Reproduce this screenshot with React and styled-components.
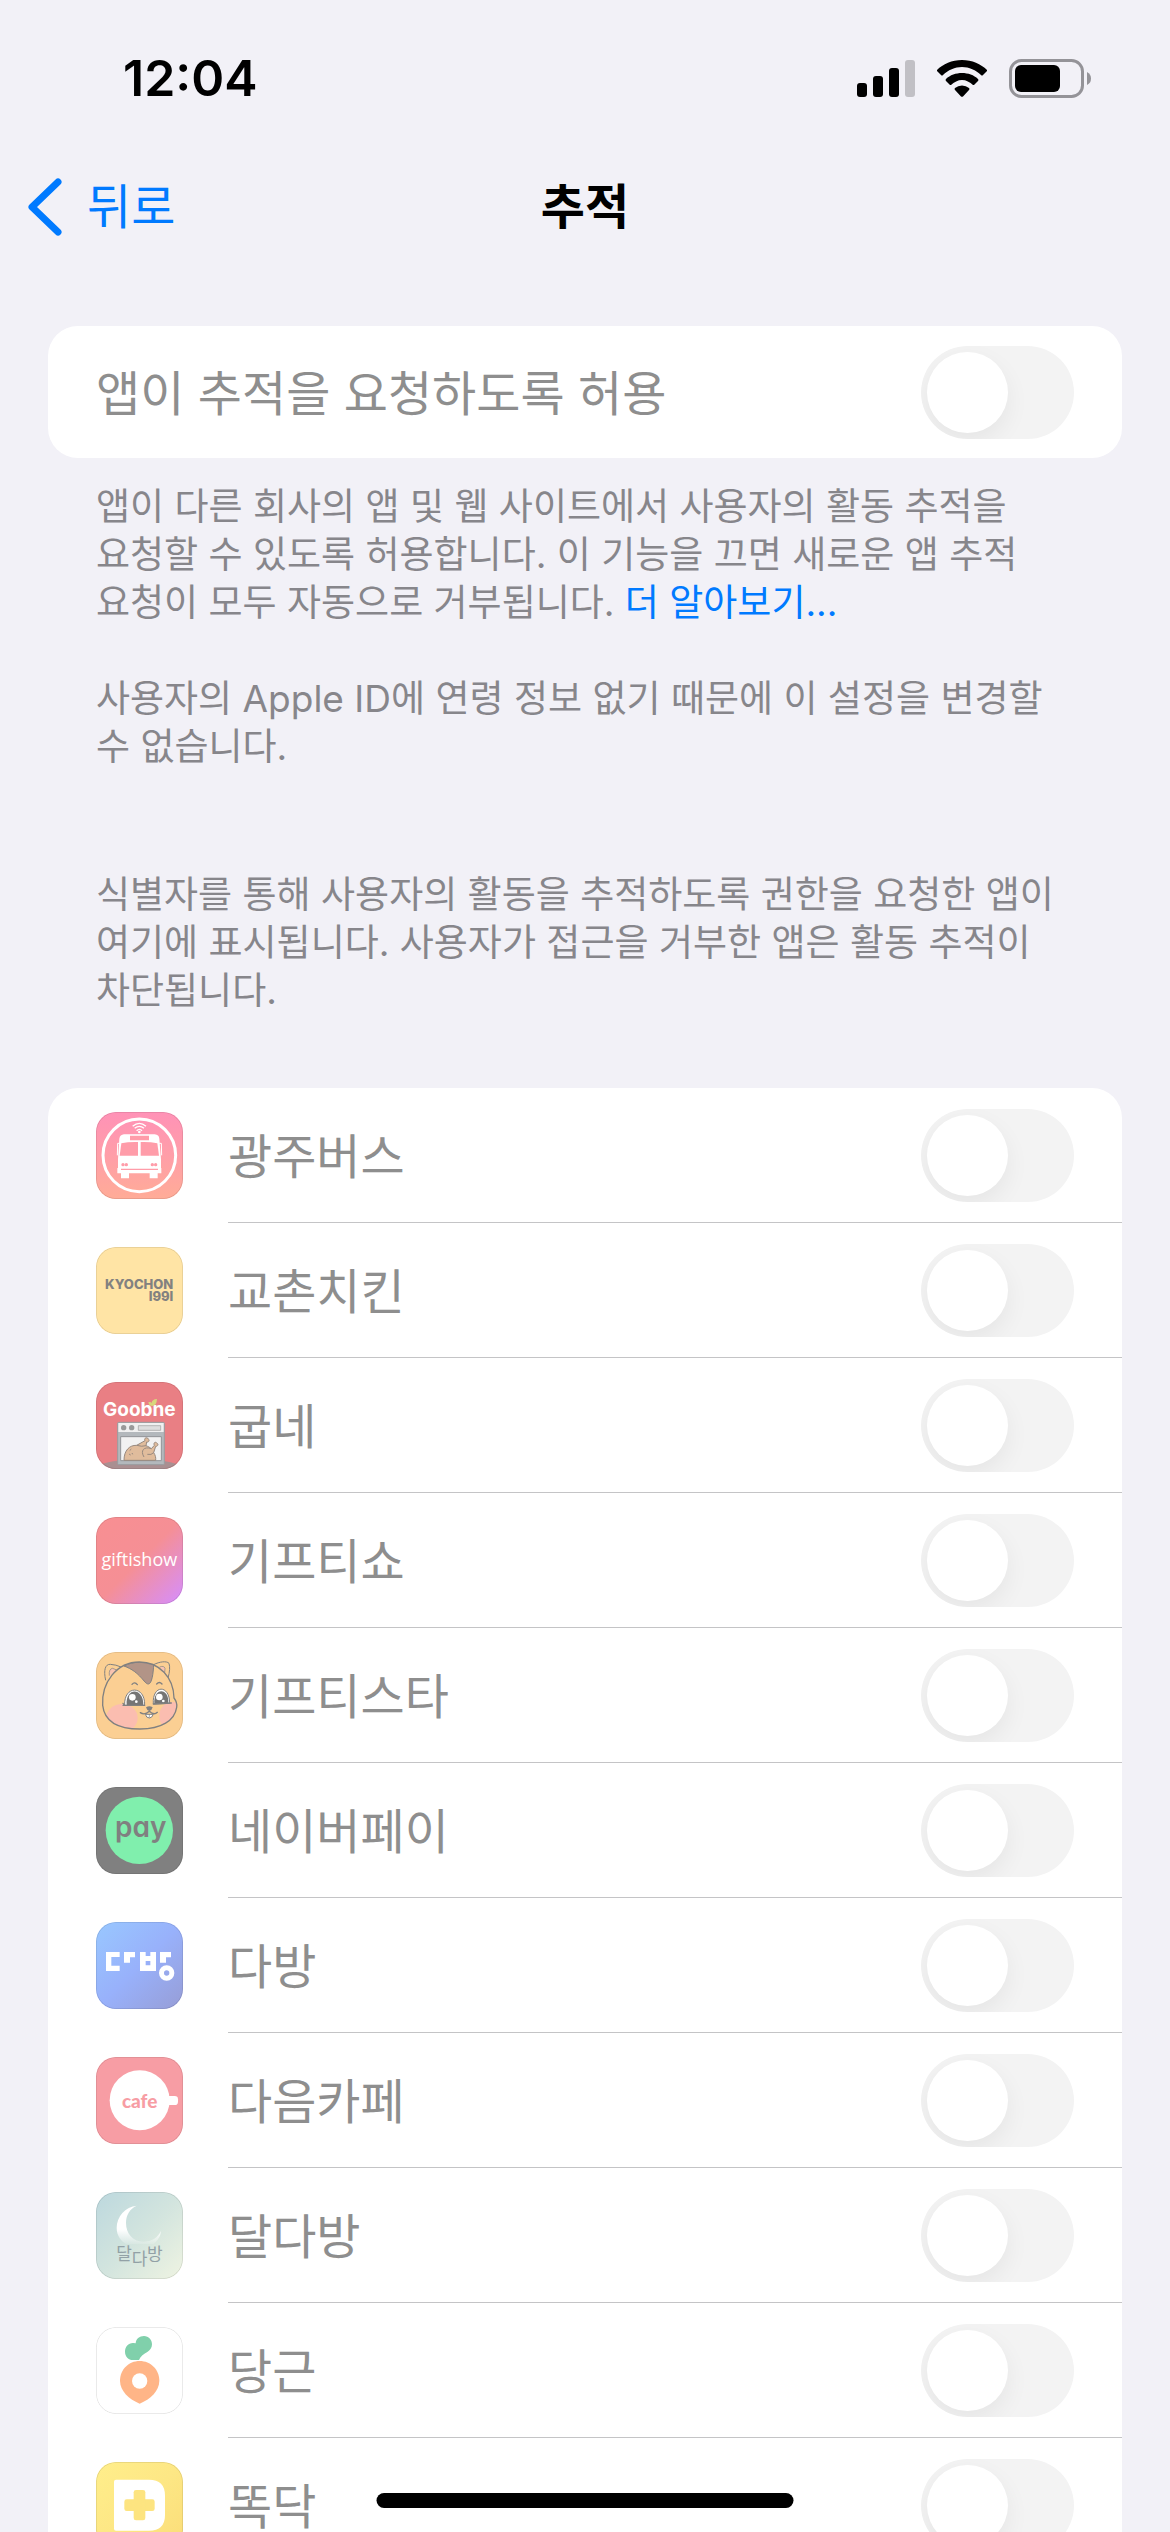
import { useId } from "react";
import styled, { createGlobalStyle } from "styled-components";

const GlobalStyle = createGlobalStyle`
    * {
        box-sizing: border-box;
    }

    body {
        margin: 0;
        background: #f2f1f7;
        font-family: Inter, "Noto Sans CJK KR", sans-serif;
        color: #000;
        word-break: keep-all;
    }
`;

const Screen = styled.div`
    height: 100vh;
    display: flex;
    flex-direction: column;
    overflow: hidden;
`;

const StatusBar = styled.header`
    flex: none;
    height: 141px;
    padding: 15px 78px 0 123px;
    display: flex;
    align-items: center;
    justify-content: space-between;
`;

const Clock = styled.time`
    font-size: 50px;
    line-height: 60px;
    font-weight: 600;
`;

const StatusIcons = styled.div`
    display: flex;
    align-items: center;
    gap: 22px;
`;

const NavBar = styled.nav`
    flex: none;
    height: 132px;
    padding: 0 27px;
    display: grid;
    grid-template-columns: 1fr auto 1fr;
    align-items: center;
`;

const BackButton = styled.button`
    justify-self: start;
    display: flex;
    align-items: center;
    gap: 24px;
    padding: 0;
    border: 0;
    background: none;
    color: #007aff;
    font-family: inherit;
    font-size: 48px;
    line-height: 60px;
    cursor: pointer;
`;

const Title = styled.h1`
    margin: 0;
    font-size: 48px;
    line-height: 60px;
    font-weight: 600;
`;

const Content = styled.main`
    flex: 1;
    min-height: 0;
    padding: 53px 48px 0;
    overflow-y: auto;
    scrollbar-width: none;
`;

const Card = styled.section`
    background: #fff;
    border-radius: 30px;
    overflow: hidden;
`;

const AppList = styled.ul`
    margin: 0;
    padding: 0;
    list-style: none;
`;

const Row = styled.li`
    display: flex;
    align-items: center;
    gap: 45px;
    padding-left: 48px;
`;

const RowBody = styled.div`
    flex: 1;
    height: ${(props) => (props.$plain ? "132px" : "135px")};
    padding-right: 48px;
    padding-left: ${(props) => (props.$plain ? "48px" : "0")};
    border-bottom: ${(props) => (props.$plain ? "0" : "1px solid #c4c4c6")};
    display: flex;
    align-items: center;
    justify-content: space-between;
`;

const RowLabel = styled.label`
    padding-top: 4px;
    color: #8e8e8e;
    font-size: 48px;
    line-height: 60px;
`;

const Switch = styled.input`
    appearance: none;
    flex: none;
    width: 153px;
    height: 93px;
    margin: 0;
    padding: 6px;
    border-radius: 47px;
    background: #f3f3f3;
    overflow: hidden;

    &::before {
        content: "";
        display: block;
        width: 81px;
        height: 81px;
        border-radius: 50%;
        background: #fff;
        box-shadow: 0 9px 24px rgba(0, 0, 0, 0.06);
    }

    &:checked::before {
        margin-left: auto;
    }
`;

const Notes = styled.div`
    padding: 25px 48px 0;
    margin-bottom: ${(props) => (props.$last ? "73px" : "75px")};
    color: #87868b;
    font-size: 37px;
    line-height: 48px;
`;

const Note = styled.p`
    margin: 0;

    & + & {
        margin-top: 48px;
    }
`;

const MoreLink = styled.a`
    color: #007aff;
    text-decoration: none;
`;

const AppIcon = styled.svg`
    flex: none;
    display: block;
    width: 87px;
    height: 87px;
    border-radius: 20px;
`;

const HomeIndicator = styled.div`
    position: fixed;
    left: 50%;
    bottom: 24px;
    width: 417px;
    height: 15px;
    border-radius: 8px;
    background: #000;
    transform: translateX(-50%);
`;

// every app icon is drawn on a 261 unit square
function Tile({ label, edge = "rgba(0, 0, 0, 0.1)", children }) {
    return (
        <AppIcon viewBox="0 0 261 261" role="img" aria-label={label}>
            {children}
            <rect x="1" y="1" width="259" height="259" rx="60" fill="none" stroke={edge} strokeWidth="3"/>
        </AppIcon>
    )
}

function Gradient({ id, from, middle, to, vertical }) {
    return (
        <linearGradient id={id} x1="0" y1="0" x2={vertical ? "0" : "1"} y2="1">
            <stop offset="0" stopColor={from}/>
            <stop offset="0.5" stopColor={middle}/>
            <stop offset="1" stopColor={to}/>
        </linearGradient>
    )
}

function BusIcon() {
    const id = useId();

    return (
        <Tile label="광주버스">
            <defs><Gradient id={id} from="#ff92b7" middle="#ff9ea8" to="#ffac97" vertical/></defs>
            <rect width="261" height="261" fill={`url(#${id})`}/>
            <circle cx="130" cy="130" r="109" fill="none" stroke="#fff" strokeWidth="9"/>
            <g fill="none" stroke="#fff" strokeWidth="4">
                <path d="M110 43Q130 25 150 43"/>
                <path d="M116 49Q130 37 144 49"/>
                <path d="M122 56Q130 48 138 56"/>
            </g>
            <circle cx="130" cy="60" r="4" fill="#fff"/>
            <path fill="#fff" d="M84 67H176Q189 68 190 80L195 142V168H196V184H185V199H161V184H99V199H75V184H64V168H66V142L70 80Q72 68 84 67Z"/>
            <path fill="none" stroke="#fff" strokeWidth="3" d="M72 94H65L64 130M188 94H196L197 130"/>
            <g fill="#ff9ca9">
                <path d="M102 71H159V85H102Z"/>
                <path d="M76 94Q98 89 126 90V131H71Z"/>
                <path d="M184 94Q162 89 134 90V131H189Z"/>
                <circle cx="81" cy="158" r="5"/>
                <circle cx="91" cy="158" r="5"/>
                <circle cx="169" cy="158" r="5"/>
                <circle cx="179" cy="158" r="5"/>
                <path d="M75 170H186V174H75Z"/>
            </g>
        </Tile>
    )
}

function KyochonIcon() {
    return (
        <Tile label="교촌치킨">
            <rect width="261" height="261" fill="#ffe4a5"/>
            <g fill="#828180" fontFamily="Inter" fontWeight="800" fontSize="39" textAnchor="end">
                <text x="232" y="127">KYOCHON</text>
                <text x="232" y="163">I99I</text>
            </g>
        </Tile>
    )
}

function GoobneIcon() {
    return (
        <Tile label="굽네">
            <rect width="261" height="261" fill="#e97f84"/>
            <ellipse cx="130" cy="261" rx="132" ry="29" fill="#aa8f91"/>
            <text x="130" y="101" fill="#fff" fontFamily="Inter" fontWeight="700" fontSize="57" textAnchor="middle">Goobne</text>
            <path fill="#d8d77b" d="M157 61Q164 58 167 63Q168 52 183 51Q182 70 170 72Q158 72 157 61Z"/>
            <rect x="65" y="121" width="140" height="127" rx="3" fill="#b3b8bc" stroke="#9a9c9e" strokeWidth="3"/>
            <path d="M67 123H203V150H67Z" fill="#f0f0f0"/>
            <circle cx="83" cy="137" r="8" fill="#999"/>
            <circle cx="107" cy="137" r="8" fill="#999"/>
            <path d="M127 131H194V145H127Z" fill="#dedede" stroke="#9a9a9a" strokeWidth="2"/>
            <path d="M74 164H196V236H74Z" fill="#f2f2f2" stroke="#919497" strokeWidth="3"/>
            <g fill="#e0bc9c" stroke="#97897f" strokeWidth="3" strokeLinejoin="round">
                <path d="M84 235C84 206 100 189 122 190L147 176C143 168 153 164 157 171C162 174 158 182 152 180L150 191C158 194 162 197 166 200L175 190C171 181 180 178 183 184C189 187 184 194 179 193L173 212C178 219 180 227 179 235Z"/>
                <path d="M150 191Q138 195 122 190M166 200C144 192 132 206 144 225M173 212Q166 220 154 217" fill="none"/>
                <path d="M101 206L106 201M99 216L104 219M108 213L110 217" fill="none"/>
            </g>
        </Tile>
    )
}

function GiftishowIcon() {
    const id = useId();

    return (
        <Tile label="기프티쇼">
            <defs><Gradient id={id} from="#f88f92" middle="#f58f95" to="#d58eff"/></defs>
            <rect width="261" height="261" fill={`url(#${id})`}/>
            <text x="130" y="147" fill="#fff" fontFamily="Open Sans" fontWeight="500" fontSize="54" textAnchor="middle">giftishow</text>
        </Tile>
    )
}

function GiftistarIcon() {
    const id = useId();
    const face = "M130 30C190 30 233 76 234 138C240 146 244 156 242 166C236 206 196 231 132 231C70 231 26 212 20 160C16 92 62 30 130 30Z";

    return (
        <Tile label="기프티스타">
            <rect width="261" height="261" fill="#fbcf93"/>
            <g fill="#fbcf93" stroke="#808080" strokeWidth="3">
                <path d="M29 85C22 54 28 36 43 37Q60 38 75 45"/>
                <path d="M173 38C190 29 212 26 219 34Q224 50 216 78"/>
                <path d="M40 71Q38 50 50 49L62 54M191 45Q204 40 207 49L206 62" fill="#f8c3b0" strokeWidth="2"/>
            </g>
            <clipPath id={id}><path d={face}/></clipPath>
            <path d={face} fill="#fbcf93"/>
            <g clipPath={`url(#${id})`}>
                <ellipse cx="78" cy="198" rx="47" ry="42" fill="#fbbdb0"/>
                <ellipse cx="228" cy="192" rx="38" ry="42" fill="#fbbdb0"/>
                <path d="M84 42C112 27 150 27 173 38C172 62 168 96 157 96C144 96 134 60 84 42Z" fill="#b29487" stroke="#808080" strokeWidth="3"/>
            </g>
            <path d={face} fill="none" stroke="#808080" strokeWidth="4"/>
            <g stroke="#808080" strokeWidth="3">
                <path d="M86 160C83 99 148 99 146 160Z" fill="#fff"/>
                <path d="M172 156C168 98 221 96 221 154Z" fill="#fff"/>
            </g>
            <path d="M92 159C87 105 143 105 142 159Z" fill="#757575"/>
            <path d="M175 156C171 105 220 105 217 154Z" fill="#757575"/>
            <g fill="#fff">
                <circle cx="109" cy="136" r="10"/>
                <circle cx="121" cy="149" r="4"/>
                <circle cx="190" cy="135" r="10"/>
                <circle cx="202" cy="147" r="4"/>
            </g>
            <g fill="none" stroke="#808080" strokeWidth="4" strokeLinecap="round">
                <path d="M108 97Q116 88 124 98M182 96Q190 87 198 96"/>
                <path d="M81 160H146M172 156L226 153M81 154L86 160"/>
                <path d="M133 182Q146 191 160 178Q174 191 184 181"/>
            </g>
            <path d="M148 187H172Q168 198 160 198Q151 198 148 187Z" fill="#fff" stroke="#808080" strokeWidth="3"/>
            <path d="M160 187V197" stroke="#808080" strokeWidth="2"/>
            <path d="M150 166Q160 160 170 166Q168 175 160 177Q152 175 150 166Z" fill="#808080"/>
        </Tile>
    )
}

const PayWord = styled.text`
    font-family: Inter;
    font-weight: 600;
    font-feature-settings: "cv11";
`;

function NaverPayIcon() {
    return (
        <Tile label="네이버페이">
            <rect width="261" height="261" fill="#808080"/>
            <circle cx="130" cy="130" r="101" fill="#80efad"/>
            <PayWord x="134" y="150" fill="#808080" fontSize="84" textAnchor="middle">pay</PayWord>
        </Tile>
    )
}

function DabangIcon() {
    const id = useId();

    return (
        <Tile label="다방">
            <defs><Gradient id={id} from="#99c8ff" middle="#98b1fb" to="#979dd6"/></defs>
            <rect width="261" height="261" fill={`url(#${id})`}/>
            <g fill="#fff" fillRule="evenodd">
                <path d="M30 90H71V105H46V131H71V147H30Z"/>
                <path d="M84 90H117V106H102V122H84Z"/>
                <path d="M132 90H149V102H163V90H180V147H132ZM149 117V130H163V117Z"/>
                <path d="M192 90H225V106H210V122H192Z"/>
                <path d="M212 130A23 23 0 1 0 212 176A23 23 0 1 0 212 130ZM212 145A8 8 0 1 1 212 161A8 8 0 1 1 212 145Z"/>
            </g>
        </Tile>
    )
}

function CafeIcon() {
    return (
        <Tile label="다음카페">
            <rect width="261" height="261" fill="#f79da4"/>
            <circle cx="131" cy="130" r="90" fill="#fff"/>
            <rect x="200" y="117" width="46" height="27" rx="10" fill="#fff"/>
            <text x="131" y="152" fill="#f79da4" fontFamily="Lato" fontWeight="900" fontSize="57" textAnchor="middle">cafe</text>
        </Tile>
    )
}

function DaldabangIcon() {
    const id = useId();

    return (
        <Tile label="달다방">
            <defs>
                <Gradient id={id} from="#bcd8de" middle="#d2e4de" to="#eff4e2"/>
                <linearGradient id={`${id}moon`} gradientUnits="userSpaceOnUse" x1="0" y1="112" x2="0" y2="162">
                    <stop offset="0" stopColor="#fff"/>
                    <stop offset="1" stopColor="#fff" stopOpacity="0"/>
                </linearGradient>
            </defs>
            <rect width="261" height="261" fill={`url(#${id})`}/>
            <path d="M122 41A67 67 0 0 0 62 108C62 132 76 148 90 156H172C186 146 194 132 195 117C186 136 168 149 142 149C110 149 90 124 90 93C90 70 101 50 122 41Z" fill={`url(#${id}moon)`}/>
            <g fill="#92a1a6" fontFamily="Noto Sans CJK KR" fontSize="51">
                <text x="61" y="204">달</text>
                <text x="107" y="220">다</text>
                <text x="153" y="204">방</text>
            </g>
        </Tile>
    )
}

function DanggeunIcon() {
    return (
        <Tile label="당근">
            <rect width="261" height="261" fill="#fff"/>
            <path fill="#80d0ab" d="M111 99C97 99 87 88 87 74C87 59 98 47 112 48Q116 48 119 49C120 36 130 27 144 27C158 27 168 38 168 52C168 63 162 70 154 75C144 81 133 88 129 99Z"/>
            <path fill="#ffb587" d="M131 102C164 102 190 128 190 161C190 192 163 216 131 230C99 216 72 192 72 161C72 128 98 102 131 102Z"/>
            <circle cx="131" cy="162" r="23" fill="#fff"/>
        </Tile>
    )
}

function DdokdakIcon() {
    const id = useId();

    return (
        <Tile label="똑닥">
            <defs><Gradient id={id} from="#ffee8b" middle="#fde785" to="#fbdd78"/></defs>
            <rect width="261" height="261" fill={`url(#${id})`}/>
            <path fill="#fff" d="M60 53H159Q207 53 207 101V158Q207 206 159 206H60Q54 206 54 200V59Q54 53 60 53Z"/>
            <g fill="#fde480">
                <rect x="85" y="112" width="91" height="35" rx="7"/>
                <rect x="113" y="84" width="35" height="91" rx="7"/>
            </g>
        </Tile>
    )
}

const apps = [
    { id: "bus", name: "광주버스", Icon: BusIcon },
    { id: "kyochon", name: "교촌치킨", Icon: KyochonIcon },
    { id: "goobne", name: "굽네", Icon: GoobneIcon },
    { id: "giftishow", name: "기프티쇼", Icon: GiftishowIcon },
    { id: "giftistar", name: "기프티스타", Icon: GiftistarIcon },
    { id: "naverpay", name: "네이버페이", Icon: NaverPayIcon },
    { id: "dabang", name: "다방", Icon: DabangIcon },
    { id: "cafe", name: "다음카페", Icon: CafeIcon },
    { id: "daldabang", name: "달다방", Icon: DaldabangIcon },
    { id: "danggeun", name: "당근", Icon: DanggeunIcon },
    { id: "ddokdak", name: "똑닥", Icon: DdokdakIcon },
];

function SignalIcon() {
    return (
        <svg width="58" height="37" viewBox="0 0 58 37" aria-hidden="true">
            <rect x="0" y="23" width="10" height="14" rx="3"/>
            <rect x="16" y="16" width="10" height="21" rx="3"/>
            <rect x="32" y="8" width="10" height="29" rx="3"/>
            <rect x="48" y="0" width="10" height="37" rx="3" fill="#c1c0c5"/>
        </svg>
    )
}

function WifiIcon() {
    return (
        <svg width="50" height="37" viewBox="0 0 50 37" aria-hidden="true">
            <path d="M25 0C35 0 44 4 50 10Q50 11 50 11L46 15Q45 16 44 15C39 10 32 7 25 7C18 7 11 10 6 15Q5 16 4 15L0 11Q0 11 0 10C6 4 15 0 25 0Z"/>
            <path d="M25 13C31 13 37 15 41 19Q42 20 41 21L37 25Q36 25 36 25C33 22 29 20 25 20C21 20 17 22 14 25Q14 25 13 25L9 21Q8 20 9 19C13 15 19 13 25 13Z"/>
            <path d="M25 25.500Q29 25.500 32 28Q33 29 32 30L26 36.500Q25 37 24 36.500L18 30Q17 29 18 28Q21 25.500 25 25.500Z"/>
        </svg>
    )
}

function BatteryIcon() {
    return (
        <svg width="83" height="39" viewBox="0 0 83 39" aria-hidden="true">
            <rect x="1.500" y="1.500" width="72" height="36" rx="11" fill="none" stroke="#949398" strokeWidth="3"/>
            <rect x="6" y="6" width="45" height="27" rx="6"/>
            <path d="M78 13Q82 15 82 19.500Q82 24 78 26Z" fill="#949398"/>
        </svg>
    )
}

export default function App() {
    return (
        <>
            <GlobalStyle/>
            <Screen>
                <StatusBar>
                    <Clock>12:04</Clock>
                    <StatusIcons>
                        <SignalIcon/>
                        <WifiIcon/>
                        <BatteryIcon/>
                    </StatusIcons>
                </StatusBar>

                <NavBar>
                    <BackButton type="button">
                        <svg width="36" height="60" viewBox="0 0 36 60" fill="none" stroke="#007aff" strokeWidth="7" strokeLinecap="round" strokeLinejoin="round" aria-hidden="true">
                            <path d="M31 5L5 30L31 55"/>
                        </svg>
                        뒤로
                    </BackButton>
                    <Title>추적</Title>
                </NavBar>

                <Content>
                    <Card>
                        <RowBody $plain>
                            <RowLabel htmlFor="allow-tracking">앱이 추적을 요청하도록 허용</RowLabel>
                            <Switch id="allow-tracking" type="checkbox" role="switch" disabled/>
                        </RowBody>
                    </Card>
                    <Notes>
                        <Note>
                            앱이 다른 회사의 앱 및 웹 사이트에서 사용자의 활동 추적을 요청할 수 있도록 허용합니다. 이 기능을 끄면 새로운 앱 추적 요청이 모두 자동으로 거부됩니다. <MoreLink href="#more">더 알아보기...</MoreLink>
                        </Note>
                        <Note>사용자의 Apple ID에 연령 정보 없기 때문에 이 설정을 변경할 수 없습니다.</Note>
                    </Notes>
                    <Notes $last>
                        <Note>식별자를 통해 사용자의 활동을 추적하도록 권한을 요청한 앱이 여기에 표시됩니다. 사용자가 접근을 거부한 앱은 활동 추적이 차단됩니다.</Note>
                    </Notes>

                    <Card>
                        <AppList>
                            {apps.map(({ id, name, Icon }) => (
                                <Row key={id}>
                                    <Icon/>
                                    <RowBody>
                                        <RowLabel htmlFor={id}>{name}</RowLabel>
                                        <Switch id={id} type="checkbox" role="switch" disabled/>
                                    </RowBody>
                                </Row>
                            ))}
                        </AppList>
                    </Card>
                </Content>
            </Screen>
            <HomeIndicator/>
        </>
    )
}
